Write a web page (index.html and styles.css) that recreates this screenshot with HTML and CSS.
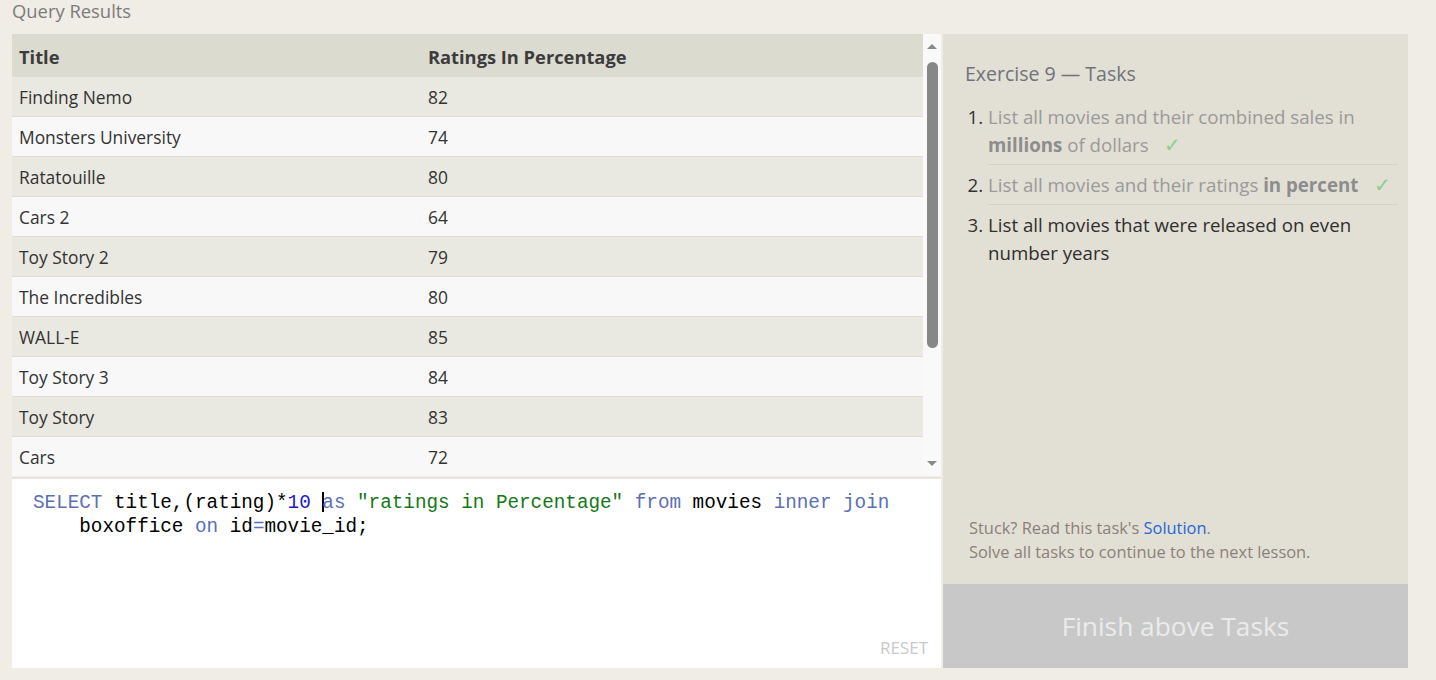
FILE: index.html
```html
<!DOCTYPE html>
<html>
<head>
<meta charset="utf-8">
<link rel="stylesheet" href="styles.css">
</head>
<body>
<div class="page">
  <div class="page-title">Query Results</div>
  <div class="main">
    <div class="left">
      <div class="results">
        <table class="grid">
          <thead>
            <tr><th class="c1">Title</th><th>Ratings In Percentage</th></tr>
          </thead>
          <tbody>
            <tr><td>Finding Nemo</td><td>82</td></tr>
            <tr><td>Monsters University</td><td>74</td></tr>
            <tr><td>Ratatouille</td><td>80</td></tr>
            <tr><td>Cars 2</td><td>64</td></tr>
            <tr><td>Toy Story 2</td><td>79</td></tr>
            <tr><td>The Incredibles</td><td>80</td></tr>
            <tr><td>WALL-E</td><td>85</td></tr>
            <tr><td>Toy Story 3</td><td>84</td></tr>
            <tr><td>Toy Story</td><td>83</td></tr>
            <tr><td>Cars</td><td>72</td></tr>
          </tbody>
        </table>
        <div class="scrollbar">
          <div class="arrow up"></div>
          <div class="track"><div class="thumb"></div></div>
          <div class="arrow down"></div>
        </div>
      </div>
      <div class="editor">
        <pre class="code"><span class="kw">SELECT</span> title,(rating)*<span class="num">10</span> <span class="caret"></span><span class="kw">as</span> <span class="str">"ratings in Percentage"</span> <span class="kw">from</span> movies <span class="kw">inner join</span>
    boxoffice <span class="kw">on</span> id<span class="kw">=</span>movie_id;</pre>
        <div class="reset">RESET</div>
      </div>
    </div>
    <div class="right">
      <div class="tasks">
        <h2 class="tasks-title">Exercise 9 — Tasks</h2>
        <ol class="task-list">
          <li class="done">List all movies and their combined sales in <b>millions</b> of dollars <span class="check">✓</span></li>
          <li class="done">List all movies and their ratings <b>in percent</b> <span class="check">✓</span></li>
          <li class="todo">List all movies that were released on even number years</li>
        </ol>
        <div class="hint">
          <div>Stuck? Read this task's <a class="link">Solution</a>.</div>
          <div>Solve all tasks to continue to the next lesson.</div>
        </div>
      </div>
      <div class="finish">Finish above Tasks</div>
    </div>
  </div>
</div>
</body>
</html>
```

FILE: styles.css
```css
html, body {
  margin: 0;
  padding: 0;
  background: #efede6;
  font-family: "Open Sans", "Noto Sans", sans-serif;
}

.page {
  padding: 0 0 0 12px;
  height: 680px;
  box-sizing: border-box;
}

.page-title {
  font-size: 18.4px;
  color: #7b7b7b;
  height: 34px;
  line-height: 22px;
}

.main {
  display: flex;
  gap: 2px;
  height: 634px;
}

.left {
  width: 929px;
  display: flex;
  flex-direction: column;
}

.results {
  display: flex;
  height: 442px;
  background: #fff;
}

.grid {
  width: 911px;
  border-collapse: collapse;
  font-size: 17.4px;
  color: #333;
}

.grid th {
  background: #dcdbd0;
  text-align: left;
  font-weight: 700;
  font-size: 18.3px;
  height: 42px;
  padding: 3px 0 0 7px;
  color: #3c3c3c;
  box-sizing: border-box;
}

.grid th.c1 { width: 409px; }

.grid td {
  height: 40px;
  padding: 1px 0 0 7px;
  border-top: 1px solid #dedcd4;
  box-sizing: border-box;
}

.grid tbody tr:nth-child(odd) td { background: #e9e8e1; }
.grid tbody tr:nth-child(even) td { background: #f8f8f8; }

.scrollbar {
  width: 18px;
  background: #f9f9f9;
  display: flex;
  flex-direction: column;
  align-items: center;
}

.arrow {
  width: 0;
  height: 0;
  border-left: 5px solid transparent;
  border-right: 5px solid transparent;
}
.arrow.up {
  border-bottom: 5px solid #8a8a8a;
  margin-top: 10px;
}
.arrow.down {
  border-top: 5px solid #8a8a8a;
  margin-bottom: 10px;
}

.track {
  flex: 1;
  width: 100%;
  display: flex;
  justify-content: center;
  padding-top: 13px;
}

.thumb {
  width: 11px;
  height: 286px;
  background: #878787;
  border-radius: 6px;
}

.editor {
  flex: 1;
  margin-top: 1px;
  background: #fff;
  border-top: 2px solid #e6e5de;
  display: flex;
  flex-direction: column;
  padding: 12px 13px 10px 21px;
  box-sizing: border-box;
}

.code {
  margin: 0;
  font-family: "Liberation Mono", "DejaVu Sans Mono", monospace;
  font-size: 19.3px;
  line-height: 24px;
  color: #000;
  flex: 1;
}

.kw { color: #5a6fb6; }
.num { color: #1d1ad0; }
.str { color: #16771a; }

.caret {
  display: inline-block;
  width: 2px;
  height: 20px;
  background: #000;
  vertical-align: -4px;
  margin-right: -2px;
}

.reset {
  align-self: flex-end;
  font-size: 17px;
  color: #c9c9c9;
  line-height: 20px;
}

.right {
  width: 465px;
  display: flex;
  flex-direction: column;
}

.tasks {
  flex: 1;
  background: #e2dfd4;
  padding: 27px 10px 0 22px;
  display: flex;
  flex-direction: column;
}

.tasks-title {
  margin: 0;
  font-size: 19.5px;
  font-weight: 400;
  color: #6f737b;
  line-height: 26px;
}

.task-list {
  margin: 16px 0 0 0;
  padding: 0 0 0 23px;
  font-size: 18.7px;
  line-height: 28px;
}

.task-list li {
  padding: 0 0 5px 0;
  margin-bottom: 6px;
  border-bottom: 1px solid #d4d1c5;
}
.task-list li:last-child { border-bottom: none; }

.task-list li::marker { color: #333; }

.task-list li.done { color: #9a9a9a; }
.task-list li.todo { color: #2f2f2f; }
.task-list li.done b { color: #8d8d8d; }

.check {
  color: #8ccf8c;
  font-size: 20px;
  margin-left: 11px;
}

.hint {
  margin-top: auto;
  padding: 0 0 20px 4px;
  font-size: 16.4px;
  line-height: 24px;
  color: #8a817a;
}

.link { color: #2467d8; }

.finish {
  height: 84px;
  background: #c8c8c8;
  color: #ebebeb;
  font-size: 26.3px;
  display: flex;
  align-items: center;
  justify-content: center;
}
```
